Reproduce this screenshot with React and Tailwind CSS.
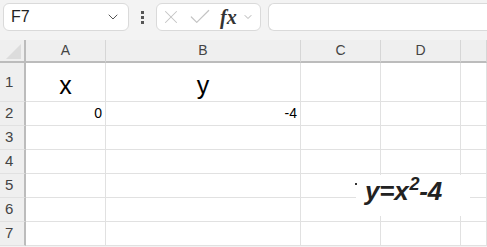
import React from 'react';
import { ChevronDown, X, Check } from 'lucide-react';

const cols = ['A', 'B', 'C', 'D', ''];
const widths = 'grid-cols-[26px_80px_195px_80px_80px_1fr]';

const Cell = ({ children, className = '' }) => (
  <div className={`border-r border-b border-[#e1e1e1] bg-white flex items-center ${className}`}>{children}</div>
);

const Row = ({ n, h, cells }) => (
  <>
    <div className={`${h} bg-[#efefef] border-r-2 border-r-[#bcbcbc] border-b border-[#e1e1e1] flex items-center pl-[5px] text-[15px] text-[#444]`}>
      {n}
    </div>
    {cols.map((c, i) => (
      <Cell key={c + i} className={h}>
        {cells && cells[i]}
      </Cell>
    ))}
  </>
);

export default function App() {
  return (
    <div className="w-[487px] h-[247px] overflow-hidden bg-[#f3f3f3] relative" style={{ fontFamily: '"Liberation Sans", Arial, sans-serif' }}>
      {/* formula bar */}
      <div className="h-[40px] flex items-start pt-[3px] pl-[3px]">
        <div className="w-[126px] h-[28px] bg-white border border-[#dadada] rounded-[6px] flex items-center justify-between pl-[7px] pr-[7px]">
          <span className="text-[16px] text-[#222]">F7</span>
          <ChevronDown className="w-[16px] h-[16px] text-[#555]" strokeWidth={1.5} />
        </div>
        <div className="w-[27px] h-[28px] flex flex-col items-center justify-center gap-[2px]">
          <span className="w-[3px] h-[3px] bg-[#555]" />
          <span className="w-[3px] h-[3px] bg-[#555]" />
          <span className="w-[3px] h-[3px] bg-[#555]" />
        </div>
        <div className="w-[105px] h-[28px] bg-white border border-[#dadada] rounded-[6px] flex items-center pl-[3px]">
          <X className="w-[22px] h-[22px] text-[#c4c4c4]" strokeWidth={1.1} />
          <Check className="w-[26px] h-[26px] ml-[5px] text-[#c4c4c4]" strokeWidth={1.1} />
          <span className="ml-[7px] text-[20px] italic font-semibold text-[#333]" style={{ fontFamily: '"Liberation Serif", serif' }}>fx</span>
          <ChevronDown className="w-[12px] h-[12px] ml-[5px] text-[#999]" strokeWidth={1.5} />
        </div>
        <div className="ml-[7px] flex-1 h-[28px] bg-white border border-[#dadada] rounded-l-[6px] border-r-0" />
      </div>

      {/* sheet */}
      <div className={`grid ${widths}`}>
        <div className="h-[23px] bg-[#efefef] border-r-2 border-r-[#bcbcbc] border-b-2 border-b-[#bcbcbc] flex items-end justify-end pr-[3px] pb-[2px]">
          <div className="w-[15px] h-[15px] bg-[#dcdcdc]" style={{ clipPath: 'polygon(100% 0, 100% 100%, 0 100%)' }} />
        </div>
        {cols.map((c, i) => (
          <div key={i} className="h-[23px] bg-[#efefef] border-r border-[#d6d6d6] border-b-2 border-b-[#bcbcbc] flex items-center justify-center text-[14px] text-[#444]">
            {c}
          </div>
        ))}
        <Row n="1" h="h-[39px]" cells={[
          <span className="w-full text-center text-[25px] text-black leading-none pt-[6px]">x</span>,
          <span className="w-full text-center text-[25px] text-black leading-none pt-[6px]">y</span>,
        ]} />
        <Row n="2" h="h-[24px]" cells={[
          <span className="w-full text-right pr-[3px] text-[14px] text-black">0</span>,
          <span className="w-full text-right pr-[3px] text-[14px] text-black">-4</span>,
        ]} />
        <Row n="3" h="h-[24px]" />
        <Row n="4" h="h-[24px]" />
        <Row n="5" h="h-[24px]" />
        <Row n="6" h="h-[24px]" />
        <Row n="7" h="h-[24px]" />
      </div>

      {/* text box shape */}
      <div className="absolute left-[356px] top-[175px] w-[114px] h-[41px] bg-white">
        <span className="absolute left-[-1px] top-[8px] w-[2px] h-[2px] bg-[#333]" />
        <span className="absolute left-[9px] top-[3px] text-[26px] font-bold italic text-[#222] leading-none tracking-[-0.2px] whitespace-nowrap" style={{ fontFamily: '"Liberation Sans", Arial, sans-serif' }}>
          y=x<span className="text-[18px] relative top-[-10px] ml-[1px]">2</span>-4
        </span>
      </div>
    </div>
  );
}
